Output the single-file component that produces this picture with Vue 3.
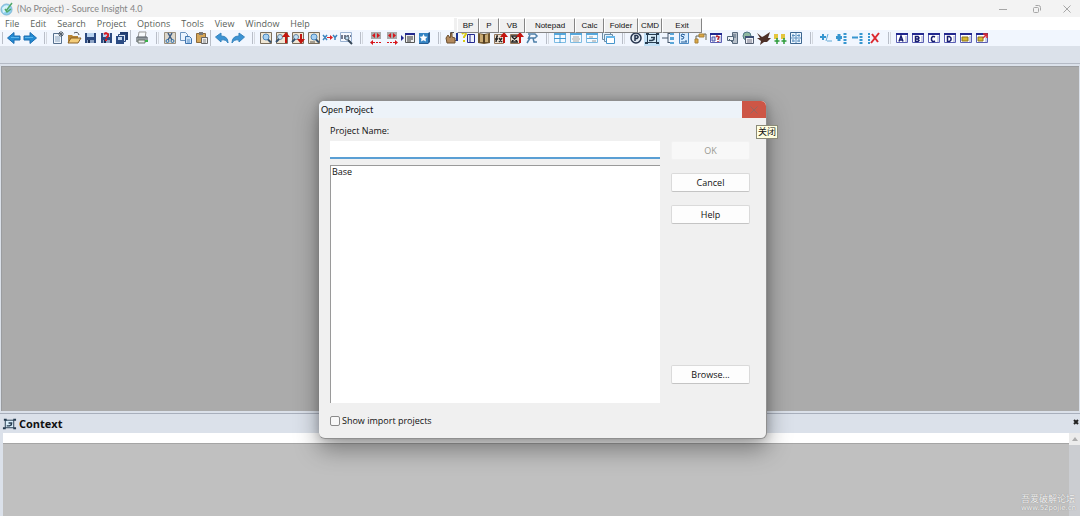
<script setup>
import { ref } from 'vue'

const menus = ['File', 'Edit', 'Search', 'Project', 'Options', 'Tools', 'View', 'Window', 'Help']
const launchers = [
  { label: 'BP', size: 'w22' },
  { label: 'P', size: 'w20' },
  { label: 'VB', size: 'w26' },
  { label: 'Notepad', size: 'w50' },
  { label: 'Calc', size: 'w29' },
  { label: 'Folder', size: 'w34' },
  { label: 'CMD', size: 'w24' },
  { label: 'Exit', size: 'w40' }
]

const projectName = ref('')
const showImports = ref(false)
const projects = ['Base']

const page = '<path d="M2.500 2.500h11v11h-11z" fill="#efe6d4" stroke="#7b6e5c"/>'
const lens = '<circle cx="8" cy="7" r="3" fill="#a9d2f3" stroke="#4b86bd"/><path d="M10 9.500l3 3" stroke="#35516e" stroke-width="2"/>'
const floppy = '<path d="M3 3h11v10H3z" fill="#2c4a80"/><path d="M5 3h7v4H5z" fill="#b9d3ef"/><path d="M5 10h7v3H5z" fill="#8ea3c4"/><path d="M6 10h2v3H6z" fill="#1b2c50"/>'
const upArrow = '<path d="M12 13V6" stroke="#c3150f" stroke-width="2"/><path d="M8 7l4-5 4 5z" fill="#c3150f"/>'
const downArrow = '<path d="M11 4v6" stroke="#c3150f" stroke-width="2"/><path d="M7 9l4 5 4-5z" fill="#c3150f"/>'
const frame = '<path d="M2.500 3.500h11v9h-11z" fill="#fff" stroke="#5a5fb4"/><path d="M2 3h12v2H2z" fill="#22288f"/><path d="M11 7h2M11 9h2M11 11h2" stroke="#9aa2cf"/>'
const grid = '<path d="M2.500 3.500h11v9h-11z" fill="#f4faff" stroke="#7dbbe2"/><path d="M2 3h12v2H2z" fill="#55a7dc"/>'
const marks = '<path d="M3 2h10v7H3z" fill="#a9a9a9"/><path d="M7 3v5L4 5.500zM9 3v5l3-2.500z" fill="#d8151b"/>'
const letter = {
  A: 'M5 11.500L7 6l2 5.500M5.500 10h3',
  B: 'M5.500 6.500v5h2.500l1-1-1-1.500H6h2l1-1-1-1.500z',
  C: 'M9 7L8 6.500H6.500L5.500 8v2l1 1.500H8l1-.5',
  D: 'M5.500 6.500v5h2L9 10V8L7.500 6.500z'
}
const framed = (k) => frame + `<path d="${letter[k]}" fill="none" stroke="#161c70" stroke-width="1.500"/>`

const icons = {
  back: '<path d="M1.500 8L8 2.500V6h6v4H8v3.500z" fill="#238bd3" stroke="#1b6db0"/><path d="M5 7.500h8" stroke="#5bb4ea"/>',
  forward: '<path d="M14.500 8L8 2.500V6H2v4h6v3.500z" fill="#238bd3" stroke="#1b6db0"/><path d="M3 7.500h8" stroke="#5bb4ea"/>',
  newFile: '<path d="M3.500 3.500h8v10h-8z" fill="#eef4fb" stroke="#57718f"/><path d="M5 7h5M5 9h5M5 11h5" stroke="#8da6c0"/><path d="M11 1v6M8 4h6M9 2l4 4M13 2L9 6" stroke="#56616d"/>',
  open: '<path d="M2 5h4l1 1h5v7H2z" fill="#b78535"/><path d="M5 8h10l-3 5H2z" fill="#f3cc79" stroke="#8a6127"/><path d="M8 3q4-2 5 2" fill="none" stroke="#4b5057"/>',
  save: floppy,
  saveAs: floppy + '<path d="M6 4l2-1 2 1v2L8 8M8 9v2" fill="none" stroke="#d51c23" stroke-width="2"/>',
  saveAll: '<path d="M6 2h8v8H6z" fill="#203c70"/><path d="M4.500 4.500h7v7h-7z" fill="#dbe6f4" stroke="#29477c"/><path d="M2 6h8v8H2z" fill="#2b4b83"/><path d="M4 7h4v3H4z" fill="#c4d7ef"/>',
  print: '<path d="M5 2h7l-1 6H4z" fill="#f7fafc" stroke="#999"/><path d="M2 7h12v5H2z" fill="#92999e"/><path d="M3 7h10" stroke="#525b62"/><path d="M4 10h7v3H4z" fill="#eee" stroke="#68736d"/><path d="M11 10h3v2h-3z" fill="#3ab249"/>',
  cut: '<path d="M2.500 2.500h11v11h-11z" fill="#dcd8ce" stroke="#9a9080"/><path d="M6 3l4 7M10 3l-4 7" stroke="#3d5c83" stroke-width="1.500"/><circle cx="5.500" cy="11" r="1.500" fill="none" stroke="#2c6fae"/><circle cx="10.500" cy="11" r="1.500" fill="none" stroke="#2c6fae"/>',
  copy: '<path d="M2.500 2.500h5l2 2v6h-7z" fill="#e9f3ff" stroke="#6b93bf"/><path d="M7.500 6.500h4l2 2v5h-6z" fill="#c9e0f8" stroke="#3f74ae"/><path d="M9 10h3M9 12h3" stroke="#5f93c8"/>',
  paste: '<path d="M2.500 3.500h9v9h-9z" fill="#d4a659" stroke="#8c6a3c"/><path d="M5 2h4v3H5z" fill="#777"/><path d="M7.500 7.500h6v6h-6z" fill="#eee" stroke="#666"/><path d="M9 10h3M9 12h3" stroke="#888"/>',
  undo: '<path d="M1.500 7L7 3v3q7 0 7 7-2-4-7-3v2z" fill="#3b93d4" stroke="#3583bd"/>',
  redo: '<path d="M14.500 7L9 3v3q-7 0-7 7 2-4 7-3v2z" fill="#3b93d4" stroke="#3583bd"/>',
  find: page + lens,
  findUp: page + '<circle cx="6" cy="7" r="2.500" fill="#c4e2f7" stroke="#6b86a0"/><path d="M2 12l3-3" stroke="#35516e" stroke-width="2"/>' + upArrow,
  findDown: page + '<circle cx="6" cy="7" r="2.500" fill="#c4e2f7" stroke="#6b86a0"/><path d="M2 12l3-3" stroke="#35516e" stroke-width="2"/>' + downArrow,
  findFiles: page + lens + '<path d="M4 12h5" stroke="#5b5348"/>',
  replace: '<path d="M1 5l4 5M5 5l-4 5M11 5l2 2.500L15 5M13 7v3" fill="none" stroke="#3c83bd" stroke-width="1.500"/><path d="M5 7.500h4" stroke="#d22"/><path d="M8 5l3 2.500L8 10z" fill="#d22"/>',
  lookup: '<path d="M2.500 2.500h11v9h-11z" fill="#f4f8ff" stroke="#9ab2d2"/><path d="M3 6h10M3 8h8" stroke="#444e68" stroke-width="1.500" stroke-dasharray="2 1"/><circle cx="9" cy="8" r="2" fill="#b9d8ef" stroke="#567"/><path d="M10 10l4 4" stroke="#345" stroke-width="2"/>',
  prevMark: marks + '<path d="M5 12.500h8" stroke="#d8151b" stroke-dasharray="2 1"/><path d="M5 10v5l-3-2.500z" fill="#d8151b"/>',
  nextMark: marks + '<path d="M3 12.500h8" stroke="#d8151b" stroke-dasharray="2 1"/><path d="M11 10v5l3-2.500z" fill="#d8151b"/>',
  jump: '<path d="M1 5l3 3-3 3z" fill="#22288f"/><path d="M5.500 3.500h9v9h-9z" fill="#eee" stroke="#555"/><path d="M5 3h10v2H5z" fill="#22288f"/><path d="M7 7h6M7 9h6M7 11h4" stroke="#333"/>',
  bookmark: '<path d="M3 3h9l2-1v10l-2 2H3z" fill="#265b91"/><path d="M3 3h9v10H3z" fill="#3584c3"/><path d="M7.500 4l1.200 2.500 2.800.3-2 2 .5 2.800-2.500-1.300L5 11.600l.5-2.800-2-2 2.800-.3z" fill="#fff"/>',
  browse: '<path d="M6.500 2.500h7v8h-7z" fill="#eee" stroke="#555"/><path d="M12 3h2v8h-2z" fill="#1d348f"/><path d="M2 8l2-3 2 3 1-5h1v4l3 1v5H3z" fill="#b48a5d" stroke="#6b4f30"/>',
  helpBook: '<path d="M2 4q3-3 4 0L4 7v1M4 10v2" fill="none" stroke="#d9ca12" stroke-width="2"/><path d="M7.500 4.500h7v8h-7z" fill="#edf0fa" stroke="#22288f"/><path d="M10 5v7" stroke="#22288f"/>',
  book: '<path d="M2 3l6 1 6-1v10l-6 1-6-1z" fill="#71572f"/><path d="M4 4l3 1v7H4zM9 5l3-1v8H9z" fill="#c9aa73"/><path d="M8 4v9" stroke="#362817"/>',
  callUp: '<path d="M2.500 4.500h9v9h-9z" fill="#e9dfd1" stroke="#95795d"/><path d="M6 6H5l-1 6M3 9h3M7 8l3 4M10 8l-3 4" fill="none" stroke="#222" stroke-width="1.500"/>' + upArrow,
  refUp: '<path d="M2.500 4.500h9v9h-9z" fill="#e9dfd1" stroke="#95795d"/><path d="M3 6h7M3 12h7M4 7l5 4M9 7l-5 4" stroke="#222" stroke-width="1.500"/>' + upArrow,
  relation: '<path d="M4 4h7l2 2-2 2H6l-3 5M6 5L4 9M9 8l1 4h3" fill="none" stroke="#4d7fa8" stroke-width="1.500"/>',
  tileGrid: grid + '<path d="M8 4v9M2 8.500h12" stroke="#4399d2"/>',
  tileH: grid + '<path d="M5 7h6M4 9h8M5 11h6" stroke="#aaa9a4"/>',
  tileV: grid + '<path d="M3 8.500h10" stroke="#55a7dc"/><path d="M5 7h4M8 11h4" stroke="#999"/>',
  cascade: '<path d="M2.500 2.500h8v7h-8z" fill="#e6f4ff" stroke="#6d8da5"/><path d="M4.500 4.500h8v7h-8z" fill="#e6f4ff" stroke="#6d8da5"/><path d="M6.500 6.500h8v7h-8z" fill="#fff" stroke="#4796cc"/><path d="M6 6h9v2H6z" fill="#68b6e8"/>',
  pCircle: '<circle cx="8" cy="8" r="5" fill="#dfe7f0" stroke="#25344d" stroke-width="1.500"/><path d="M7 11V5.500h2l1 1v1l-1 1H7" fill="none" stroke="#25344d" stroke-width="1.500"/>',
  context: '<path d="M3.500 4.500h9v8h-9z" fill="#d8edf9" stroke="#263c50"/><path d="M2 3h3v2H2zM12 3h3v2h-3zM1 12h3v2H1zM12 12h3v2h-3z" fill="#263c50"/><path d="M5 10.500h3l2-1V7M7 7.500h4" fill="none" stroke="#263c50" stroke-width="1.500"/>',
  tree: '<path d="M2 8h6M8 3v10M8 3.500h2M8 12.500h2" stroke="#46576b"/><path d="M10 2h4v3h-4zM10 7h4v3h-4zM10 12h4v2h-4z" fill="#5aa6d8"/>',
  symbol: '<path d="M3.500 2.500h9v11h-9z" fill="#d8edff" stroke="#4d8ac2"/><path d="M9 5L6 4 5 6l3 1-1 2H5M9 11h2M5 12h6" fill="none" stroke="#235c98"/>',
  folders: '<path d="M3 9h3v4H3zM7 4h5v3H7z" fill="#dba846" stroke="#a98138"/><path d="M4 9V6h3M12 4h2v6" fill="none" stroke="#665"/>',
  projectHelp: frame + '<path d="M4 7h3v4H4z" fill="#cbd1ef" stroke="#4b55aa"/><path d="M8 7l1-1 2 1-1 2v1M10 11v1" fill="none" stroke="#b52532" stroke-width="1.500"/>',
  clip: '<path d="M8.500 2.500h5v11h-5z" fill="#b7c0ca" stroke="#596a7d"/><path d="M3.500 6.500h6v4h-6z" fill="#eef2f6" stroke="#53667a"/><path d="M5 9l4 4M9 5h3M9 7h3" stroke="#53667a"/>',
  snippet: '<circle cx="7" cy="6" r="4" fill="#8eb8a0" stroke="#4d7684"/><path d="M5.500 6.500h8v7h-8z" fill="#eef0f5" stroke="#525d70"/><path d="M5 6h9v2H5z" fill="#3c4f76"/><path d="M7 10h5M7 12h5" stroke="#778"/>',
  bird: '<path d="M1 3l5 4 2-1 6-4-2 6 3 0-4 4H8l-4 3 1-4-4-3h3z" fill="#4d3028"/>',
  quotes: '<path d="M2 4h4v5H2zM9 4h4v5H9z" fill="#e4c63e"/><path d="M5 8v6M2.500 11h5M12 8v6M9.500 11h5" stroke="#2d9c3a" stroke-width="1.500"/>',
  panels: '<path d="M2.500 2.500h11v11h-11z" fill="#edf6ff" stroke="#3c6690"/><path d="M8 3v10M3 8h10M5 4v3M11 4v3M5 9v3M11 9v3M4 5.500h3M9 5.500h3M4 11h3M9 11h3" stroke="#5e91bf"/>',
  plusMinus: '<path d="M2 7h6M5 4v6" stroke="#3796d0" stroke-width="2"/><path d="M10 4l-2 7M9 11h5" stroke="#62a9d6"/>',
  expand: '<path d="M2 7.500h6M5 4v7" stroke="#3796d0" stroke-width="3"/><path d="M11 3v11" stroke="#3796d0" stroke-width="3" stroke-dasharray="2 1"/>',
  collapse: '<path d="M2 7.500h6" stroke="#3796d0" stroke-width="2"/><path d="M11 3v11" stroke="#3796d0" stroke-width="3" stroke-dasharray="2 1"/>',
  removeAll: '<path d="M3 3v11" stroke="#3796d0" stroke-width="2" stroke-dasharray="2 1"/><path d="M6 4l6 8M13 3L5 13" stroke="#dc2930" stroke-width="2"/>',
  layoutA: framed('A'),
  layoutB: framed('B'),
  layoutC: framed('C'),
  layoutD: framed('D'),
  layoutLoad: frame + '<path d="M4 7h6v4H4z" fill="#d8b82f" stroke="#8b741e"/>',
  layoutSave: frame + '<path d="M4 7h5v4H4z" fill="#d8b82f" stroke="#8b741e"/><path d="M9 8l4-4M9 4h4v4" fill="none" stroke="#dc2930" stroke-width="1.500"/>'
}

const toolbars = [
  { runs: [['back', 'forward']] },
  { runs: [['newFile', 'open', 'save', 'saveAs', 'saveAll'], ['print']] },
  { runs: [['cut', 'copy', 'paste'], ['undo', 'redo']] },
  { runs: [['find', 'findUp', 'findDown', 'findFiles', 'replace', 'lookup']] },
  { wide: true, runs: [['prevMark', 'nextMark', 'jump', 'bookmark']] },
  { runs: [['browse', 'helpBook', 'book', 'callUp', 'refUp', 'relation']] },
  { runs: [['tileGrid', 'tileH', 'tileV', 'cascade']] },
  { runs: [['pCircle', 'context', 'tree', 'symbol', 'folders', 'projectHelp', 'clip', 'snippet', 'bird', 'quotes', 'panels']] },
  { wide: true, runs: [['plusMinus', 'expand', 'collapse', 'removeAll']] },
  { runs: [['layoutA', 'layoutB', 'layoutC', 'layoutD', 'layoutLoad', 'layoutSave']] }
]
</script>

<template>
  <div class="app">
    <header class="titlebar">
      <svg class="logo" viewBox="0 0 14 14" aria-hidden="true">
        <circle cx="6.500" cy="7.500" r="5.500" fill="#8fd0ee" stroke="#7fb6d4" />
        <path d="M2 6q4-5 8-1l-3 4-4 2z" fill="#d7f2fb" />
        <path d="M6 9l6-8M5 7l2 3 4-3" fill="none" stroke="#4fa869" stroke-width="1.500" />
      </svg>
      <h1>(No Project) - Source Insight 4.0</h1>
      <div class="window-controls">
        <button aria-label="Minimize"><svg viewBox="0 0 10 10"><path d="M1 5.500h8" /></svg></button>
        <button aria-label="Restore"><svg viewBox="0 0 10 10"><rect x="1.500" y="3.500" width="5" height="5" rx="1" /><path d="M3.500 1.500h3q2 0 2 2v3" /></svg></button>
        <button aria-label="Close"><svg viewBox="0 0 10 10"><path d="M1.500 1.500l7 7M8.500 1.500l-7 7" /></svg></button>
      </div>
    </header>

    <nav class="menubar">
      <button v-for="m in menus" :key="m">{{ m }}</button>
    </nav>

    <div class="toolbar">
      <div v-for="(bar, i) in toolbars" :key="i" class="bar">
        <span class="grip" :class="{ first: i === 0, wide: bar.wide }"></span>
        <div v-for="(run, j) in bar.runs" :key="j" class="run">
          <button v-for="name in run" :key="name" :aria-label="name" :class="{ active: name === 'context' }">
            <svg viewBox="0 0 16 16" v-html="icons[name]"></svg>
          </button>
        </div>
      </div>
    </div>
    <div class="dock"></div>

    <main class="workspace"></main>

    <section class="context">
      <div class="context-head">
        <svg viewBox="0 0 16 16" aria-hidden="true" v-html="icons.context"></svg>
        <h2>Context</h2>
        <button aria-label="Close context"><svg viewBox="0 0 6 6"><path d="M1 1l4 4M5 1L1 5" /></svg></button>
      </div>
      <div class="context-body">
        <div class="context-view">
          <div class="line"></div>
        </div>
        <div class="scroll"><button aria-label="Scroll up"></button></div>
      </div>
    </section>

    <div class="launcher">
      <button v-for="l in launchers" :key="l.label" :class="l.size">{{ l.label }}</button>
    </div>

    <section class="dialog" role="dialog" aria-labelledby="dialog-title">
      <header class="dialog-title">
        <h2 id="dialog-title">Open Project</h2>
        <button aria-label="关闭"><svg viewBox="0 0 10 10"><path d="M1.500 1.500l7 7M8.500 1.500l-7 7" /></svg></button>
      </header>
      <form class="dialog-body" @submit.prevent>
        <div class="fields">
          <label for="project-name">Project Name:</label>
          <input id="project-name" v-model="projectName" type="text" />
          <ul class="list" aria-label="Projects">
            <li v-for="p in projects" :key="p">{{ p }}</li>
          </ul>
          <label class="check"><input v-model="showImports" type="checkbox" /><span>Show import projects</span></label>
        </div>
        <div class="actions">
          <button type="submit" disabled>OK</button>
          <button type="button">Cancel</button>
          <button type="button">Help</button>
          <button type="button" class="browse">Browse...</button>
        </div>
      </form>
      <div class="tip" role="tooltip">关闭</div>
    </section>

    <div class="watermark">
      <div>吾爱破解论坛</div>
      <div class="site">www.52pojie.cn</div>
    </div>
  </div>
</template>

<style>
body {
  margin: 0;
}
</style>

<style scoped>
.app {
  position: relative;
  display: flex;
  flex-direction: column;
  height: 100vh;
  overflow: hidden;
  background: #dbe1ea;
  color: #111;
  font: 9px/12px "Open Sans", "Noto Sans CJK SC", sans-serif;
}
button,
input {
  box-sizing: border-box;
  margin: 0;
  padding: 0;
  border: 0;
  background: none;
  color: inherit;
  font: inherit;
}
h1,
h2,
ul {
  margin: 0;
  padding: 0;
  font: inherit;
  list-style: none;
}
svg {
  display: block;
}

.titlebar {
  display: flex;
  align-items: center;
  height: 17px;
  background: #f3f3f3;
  color: #858585;
}
.titlebar h1,
.dialog-title h2 {
  font-family: Lato, "Open Sans", sans-serif;
}
.logo {
  width: 14px;
  height: 14px;
  margin-right: 3px;
}
.window-controls {
  display: flex;
  margin-left: auto;
}
.window-controls button {
  display: grid;
  place-items: center;
  width: 34px;
  height: 17px;
}
.window-controls button:last-child {
  width: 26px;
}
.window-controls svg,
.dialog-title svg {
  width: 10px;
  height: 10px;
  fill: none;
  stroke: #a6a6a6;
}

.menubar {
  display: flex;
  gap: 11px;
  height: 13px;
  padding-left: 5px;
  background: #fff;
  color: #5a5f5a;
}

.toolbar {
  display: flex;
  height: 16px;
  background: #f1f6fe;
}
.bar {
  display: flex;
}
.grip {
  box-sizing: border-box;
  width: 12px;
  height: 16px;
  background: linear-gradient(#b9bec8, #b9bec8) 6px 2px / 1px 12px no-repeat,
    linear-gradient(#d4d8df, #d4d8df) 8px 2px / 1px 12px no-repeat;
}
.grip.first {
  width: 6px;
  background-position: 2px 2px, -4px 2px;
}
.grip.wide {
  width: 14px;
}
.run {
  display: flex;
}
.run + .run {
  padding-left: 3px;
  border-left: 1px solid #b9bec8;
}
.run button,
.run svg {
  width: 16px;
  height: 16px;
}
.run button.active {
  background: #c3e1f6;
}
.dock {
  height: 17px;
  border-bottom: 1px solid #b4bac5;
}

.workspace {
  flex: 1;
  margin: 2px 1px 2px;
  border: 1px solid #9a9c9f;
  border-width: 1px 0 0 1px;
  background: #ababab;
}

.context {
  border-top: 1px solid #a8afbc;
}
.context-head {
  display: flex;
  align-items: center;
  height: 19px;
  padding-left: 2px;
}
.context-head > svg {
  width: 15px;
  height: 15px;
  margin-right: 2px;
}
.context-head h2 {
  padding-top: 1px;
  font-size: 11px;
  font-weight: 700;
}
.context-head button {
  margin-left: auto;
  padding: 0 1px 3px 0;
}
.context-head button svg {
  width: 6px;
  height: 6px;
  stroke: #222;
  stroke-width: 2;
}
.context-body {
  display: flex;
  height: 83px;
  margin-left: 3px;
}
.context-view {
  flex: 1;
  background: #c0c0c0;
}
.line {
  height: 10px;
  border-bottom: 1px solid #a5a5a5;
  background: #fff;
}
.scroll {
  width: 11px;
  background: #cbcdd1;
}
.scroll button {
  display: grid;
  place-items: center;
  width: 11px;
  height: 12px;
  background: #ececec;
}
.scroll button::before {
  content: "";
  border: 3px solid transparent;
  border-top: 0;
  border-bottom: 4px solid #adadad;
}

.launcher {
  position: absolute;
  top: 18px;
  left: 454px;
  display: flex;
  padding-left: 3px;
  background: #f0f0f0;
  font: 8px/12px "Liberation Sans", Arial, sans-serif;
}
.launcher button {
  height: 15px;
  padding-top: 1px;
  border: 1px solid #fff;
  border-right-color: #858585;
  border-bottom-color: #858585;
  background: #f0f0f0;
}
.w20 { width: 20px; }
.w22 { width: 22px; }
.w24 { width: 24px; }
.w26 { width: 26px; }
.w29 { width: 29px; }
.w34 { width: 34px; }
.w40 { width: 40px; }
.w50 { width: 50px; }

.dialog {
  position: absolute;
  top: 100px;
  left: 319px;
  box-sizing: border-box;
  width: 448px;
  border: 1px solid #8f8f8f;
  border-width: 1px 1px 1px 0;
  border-radius: 6px;
  background: #f0f0f0;
  box-shadow: 0 10px 24px rgba(0, 0, 0, 0.38), 0 0 8px rgba(0, 0, 0, 0.18);
}
.dialog-title {
  display: flex;
  align-items: center;
  height: 17px;
  padding-left: 2px;
  border-radius: 5px 5px 0 0;
  background: #edf3f9;
  overflow: hidden;
}
.dialog-title button {
  display: grid;
  place-items: center;
  width: 24px;
  height: 17px;
  margin-left: auto;
  background: #cd5646;
}
.dialog-title svg {
  stroke: #96655f;
}
.dialog-body {
  display: flex;
  gap: 11px;
  padding: 7px 16px 11px 11px;
}
.fields {
  display: flex;
  flex: 1;
  flex-direction: column;
}
#project-name {
  height: 18px;
  margin: 4px 0 6px;
  padding: 0 3px;
  border-bottom: 2px solid #5a9fd4;
  background: #fff;
  outline: none;
}
.list {
  box-sizing: border-box;
  height: 238px;
  padding: 0 1px;
  border: 1px solid #9a9a9a;
  border-width: 1px 0 0 1px;
  background: #fff;
}
.check {
  display: flex;
  align-items: center;
  gap: 2px;
  margin-top: 12px;
}
.check input {
  appearance: none;
  width: 10px;
  height: 10px;
  border: 1px solid #8a8a8a;
  border-radius: 2px;
  background: #f8f8f8;
}
.actions {
  display: flex;
  flex-direction: column;
  gap: 13px;
  width: 79px;
  padding: 16px 0 43px;
}
.actions button {
  height: 19px;
  border: 1px solid #dadada;
  border-bottom-color: #c4c4c4;
  border-radius: 2px;
  background: #fdfdfd;
}
.actions button:disabled {
  border-color: #f2f2f2;
  background: #f8f8f8;
  color: #9a9a92;
}
.actions .browse {
  margin-top: auto;
}
.tip {
  position: absolute;
  top: 24px;
  left: 437px;
  padding: 0 1px;
  border: 1px solid #8b8b78;
  background: #ffffe1;
  font-family: "Noto Sans CJK SC", sans-serif;
  white-space: nowrap;
}

.watermark {
  position: absolute;
  right: 4px;
  bottom: 3px;
  color: #f4f4f4;
  font: 9px/10px "Noto Sans CJK SC", sans-serif;
  text-shadow: 0 0 1px #777;
}
.site {
  font: 7px/9px "DejaVu Sans", sans-serif;
}
</style>
